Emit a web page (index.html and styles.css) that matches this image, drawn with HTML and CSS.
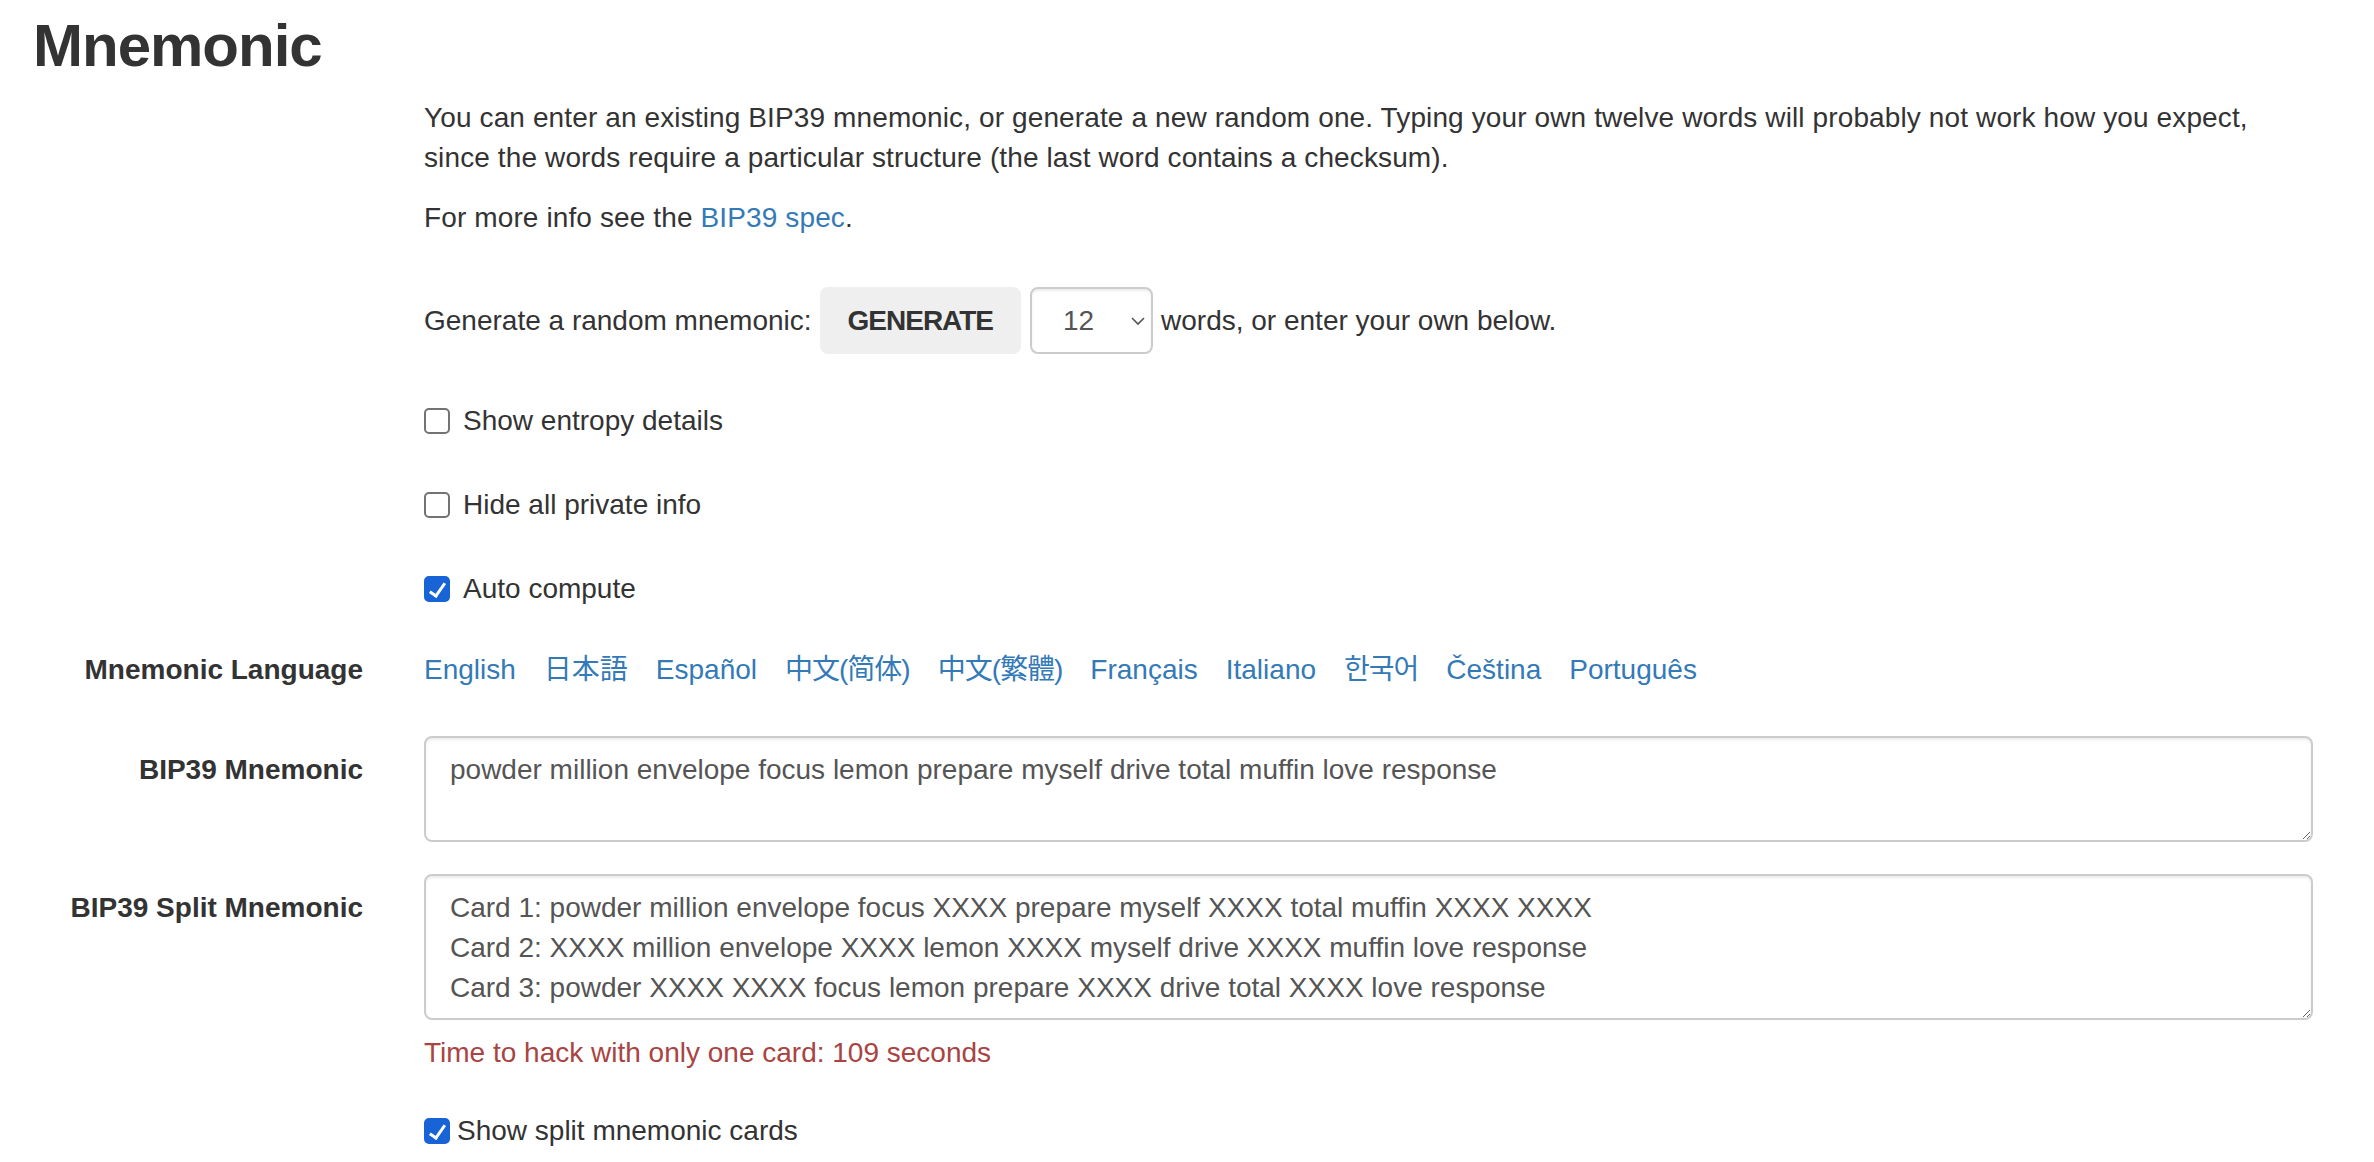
FILE: index.html
```html
<!DOCTYPE html>
<html lang="en">
<head>
<meta charset="utf-8">
<title>Mnemonic</title>
<link rel="stylesheet" href="styles.css">
</head>
<body>
<div class="page">
  <h2 class="title">Mnemonic</h2>

  <div class="row intro">
    <div class="label-col"></div>
    <div class="content-col">
      <p class="para">You can enter an existing BIP39 mnemonic, or generate a new random one. Typing your own twelve words will probably not work how you expect, since the words require a particular structure (the last word contains a checksum).</p>
      <p class="para">For more info see the <a href="#bip39">BIP39 spec</a>.</p>
    </div>
  </div>

  <div class="row gen-row">
    <div class="label-col"></div>
    <div class="content-col">
      <div class="gen">
        <span>Generate a random mnemonic:</span>
        <button class="btn-generate" type="button">GENERATE</button>
        <span class="select-wrap">
          <select class="strength">
            <option>3</option><option>6</option><option>9</option>
            <option selected>12</option><option>15</option><option>18</option><option>21</option><option>24</option>
          </select>
          <svg class="chev" width="14" height="10" viewBox="0 0 14 10"><path d="M1 2 L7 8 L13 2" fill="none" stroke="#555" stroke-width="1.6"/></svg>
        </span>
        <span>words, or enter your own below.</span>
      </div>
    </div>
  </div>

  <div class="row cb-row first">
    <div class="label-col"></div>
    <div class="content-col">
      <label class="check"><input type="checkbox" class="cb"><span>Show entropy details</span></label>
    </div>
  </div>
  <div class="row cb-row">
    <div class="label-col"></div>
    <div class="content-col">
      <label class="check"><input type="checkbox" class="cb"><span>Hide all private info</span></label>
    </div>
  </div>
  <div class="row cb-row">
    <div class="label-col"></div>
    <div class="content-col">
      <label class="check"><input type="checkbox" class="cb" checked><span>Auto compute</span></label>
    </div>
  </div>

  <div class="row lang-row">
    <div class="label-col strong">Mnemonic Language</div>
    <div class="content-col">
      <div class="langs">
        <a href="#english">English</a>
        <a href="#japanese">日本語</a>
        <a href="#spanish">Español</a>
        <a href="#chinese_simplified" class="cjk-narrow">中文(简体)</a>
        <a href="#chinese_traditional" class="cjk-narrow">中文(繁體)</a>
        <a href="#french">Français</a>
        <a href="#italian">Italiano</a>
        <a href="#korean" class="ko-narrow">한국어</a>
        <a href="#czech">Čeština</a>
        <a href="#portuguese">Português</a>
      </div>
    </div>
  </div>

  <div class="row field-row phrase-row">
    <div class="label-col strong field-label">BIP39 Mnemonic</div>
    <div class="content-col">
      <textarea class="field phrase">powder million envelope focus lemon prepare myself drive total muffin love response</textarea>
    </div>
  </div>

  <div class="row field-row split-row">
    <div class="label-col strong field-label">BIP39 Split Mnemonic</div>
    <div class="content-col">
      <textarea class="field split">Card 1: powder million envelope focus XXXX prepare myself XXXX total muffin XXXX XXXX
Card 2: XXXX million envelope XXXX lemon XXXX myself drive XXXX muffin love response
Card 3: powder XXXX XXXX focus lemon prepare XXXX drive total XXXX love response</textarea>
      <div class="danger">Time to hack with only one card: 109 seconds</div>
      <label class="check tight"><input type="checkbox" class="cb" checked><span>Show split mnemonic cards</span></label>
    </div>
  </div>
</div>
</body>
</html>
```

FILE: styles.css
```css
html, body {
  margin: 0;
  padding: 0;
  background: #fff;
}

body {
  font-family: "Liberation Sans", Arial, "Noto Sans CJK JP", "Noto Sans CJK KR", sans-serif;
  font-size: 28px;
  line-height: 40px;
  color: #333;
}

.page {
  padding: 0 61px 0 0;
}

.title {
  margin: 13px 0 0 0;
  padding-left: 33px;
  font-size: 60px;
  line-height: 66px;
  font-weight: bold;
  letter-spacing: -1px;
  color: #333;
}

.row {
  display: flex;
  align-items: flex-start;
}

.label-col {
  width: 393px;
  flex: none;
  box-sizing: border-box;
  padding-right: 30px;
  text-align: right;
}

.strong {
  font-weight: bold;
}

.content-col {
  flex: 1;
  min-width: 0;
  padding-left: 31px;
}

.intro {
  margin-top: 19px;
}

.para {
  margin: 0 0 20px 0;
  letter-spacing: 0.12px;
}

.para:last-child {
  margin-bottom: 0;
}

a {
  color: #337ab7;
  text-decoration: none;
}

.gen-row {
  margin-top: 49px;
}

.gen {
  display: flex;
  align-items: center;
  gap: 8px;
  height: 67px;
  white-space: nowrap;
}

.btn-generate {
  height: 67px;
  padding: 0 28px;
  border: none;
  border-radius: 8px;
  background: #efefef;
  color: #333;
  font-family: inherit;
  font-size: 28px;
  font-weight: bold;
  letter-spacing: -1px;
  line-height: 40px;
}

.select-wrap {
  position: relative;
  display: inline-block;
  height: 67px;
  margin-left: 1px;
}

.strength {
  appearance: none;
  -webkit-appearance: none;
  width: 123px;
  height: 67px;
  box-sizing: border-box;
  border: 2px solid #ccc;
  border-radius: 8px;
  background: #fff;
  color: #555;
  font-family: inherit;
  font-size: 28px;
  padding: 0 0 0 31px;
  margin: 0;
  box-shadow: inset 0 2px 2px rgba(0, 0, 0, 0.075);
}

.chev {
  position: absolute;
  right: 8px;
  top: 29px;
  pointer-events: none;
}

.cb-row {
  margin-top: 44px;
}

.cb-row.first {
  margin-top: 47px;
}

.check {
  display: flex;
  align-items: center;
  gap: 13px;
  height: 40px;
  font-weight: normal;
}

.check.tight {
  gap: 7px;
  margin-top: 38px;
}

.cb {
  appearance: none;
  -webkit-appearance: none;
  flex: none;
  position: relative;
  width: 26px;
  height: 26px;
  margin: 0;
  box-sizing: border-box;
  border: 2px solid #737373;
  border-radius: 5px;
  background: #fff;
}

.cb:checked {
  background: #1864d6;
  border-color: #1864d6;
}

.cb:checked::after {
  content: "";
  position: absolute;
  left: 7px;
  top: 2px;
  width: 6px;
  height: 14px;
  border: solid #fff;
  border-width: 0 3px 3px 0;
  transform: rotate(35deg);
}

.lang-row {
  margin-top: 41px;
}

.langs {
  display: flex;
  gap: 28px;
  white-space: nowrap;
}

.cjk-narrow {
  letter-spacing: -1px;
}

.ko-narrow {
  letter-spacing: -1px;
}

.field-row .field-label {
  padding-top: 14px;
}

.phrase-row {
  margin-top: 46px;
}

.split-row {
  margin-top: 32px;
}

.field {
  display: block;
  width: 100%;
  box-sizing: border-box;
  margin: 0;
  padding: 12px 24px;
  border: 2px solid #ccc;
  border-radius: 8px;
  box-shadow: inset 0 2px 2px rgba(0, 0, 0, 0.075);
  font-family: "Liberation Sans", Arial, sans-serif;
  font-size: 28px;
  line-height: 40px;
  color: #555;
  background: #fff;
  resize: vertical;
  overflow: hidden;
}

.phrase {
  height: 106px;
}

.split {
  height: 146px;
}

.danger {
  margin-top: 13px;
  color: #a94442;
}
```
